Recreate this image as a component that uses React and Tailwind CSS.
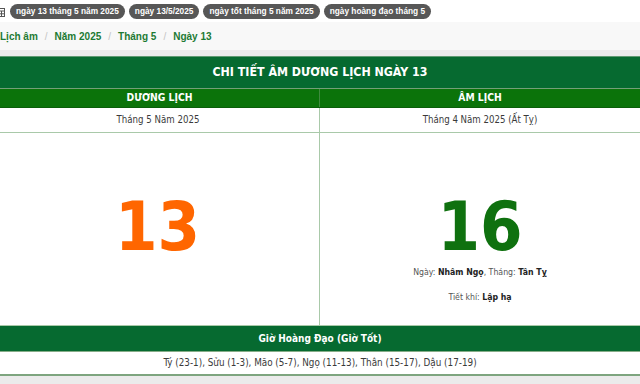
import React from 'react';

const chips = ['ngày 13 tháng 5 năm 2025', 'ngày 13/5/2025', 'ngày tốt tháng 5 năm 2025', 'ngày hoàng đạo tháng 5'];
const crumbs = ['Lịch âm', 'Năm 2025', 'Tháng 5', 'Ngày 13'];

export default function App() {
  return (
    <div className="w-[640px] h-[384px] overflow-hidden bg-[#ebebeb] font-['Liberation_Sans',Arial,sans-serif]">
      {/* tag chips */}
      <div className="h-[22px] bg-white flex items-center gap-[4px] pt-[1px]">
        <svg className="ml-[-5px] mr-[1px]" width="10" height="10" viewBox="0 0 10 10">
          <rect x="0.5" y="1.5" width="9" height="8" fill="none" stroke="#555" />
          <path d="M0.5 4 H9.5 M3.5 4 V9.5 M6.5 4 V9.5 M0.5 6.8 H9.5" stroke="#555" strokeWidth="1" />
        </svg>
        {chips.map((c) => (
          <span key={c} className="h-[15px] px-[6px] rounded-full bg-[#575757] text-white text-[8.3px] font-bold leading-[15px] whitespace-nowrap">
            {c}
          </span>
        ))}
      </div>

      {/* breadcrumb */}
      <div className="h-[28px] bg-[#f8f8f8] flex items-center text-[10px] font-bold text-[#1d7a33]">
        {crumbs.map((c, i) => (
          <React.Fragment key={c}>
            {i > 0 && <span className="px-[7px] font-normal text-[#c4c4c4]">/</span>}
            <span>{c}</span>
          </React.Fragment>
        ))}
      </div>

      <div className="h-[6px]" />

      {/* calendar table */}
      <div className="bg-white font-['DejaVu_Sans',sans-serif] font-stretch-condensed">
        <div className="h-[32px] bg-[#066a30] border-t border-[#5f9a72] flex items-center justify-center text-white text-[12.3px] font-bold">
          CHI TIẾT ÂM DƯƠNG LỊCH NGÀY 13
        </div>
        <div className="h-[1px] bg-[#739f78]" />
        <div className="grid grid-cols-2 h-[19px] bg-[#0b730a] border-b border-[#0a5f0a] text-white text-[10.3px] font-bold">
          <div className="flex items-center justify-center border-r border-[#3f8a3f]">DƯƠNG LỊCH</div>
          <div className="flex items-center justify-center">ÂM LỊCH</div>
        </div>
        <div className="grid grid-cols-2 h-[25px] border-b border-[#a9c9a9] text-[9.6px] text-[#3a3a3a]">
          <div className="flex items-center justify-center border-r border-[#a9c9a9] pr-[3px]">Tháng 5 Năm 2025</div>
          <div className="flex items-center justify-center">Tháng 4 Năm 2025 (Ất Tỵ)</div>
        </div>
        <div className="grid grid-cols-2 h-[193px] border-b border-[#a9c9a9]">
          <div className="border-r border-[#a9c9a9] flex justify-center pt-[60px] pr-[4px]">
            <span className="text-[68px] leading-[68px] font-bold text-[#ff6600]">13</span>
          </div>
          <div className="flex flex-col items-center pt-[60px]">
            <span className="text-[68px] leading-[68px] font-bold text-[#0f710f]">16</span>
            <div className="mt-[5px] text-[8.7px] leading-[12px] text-[#555]">
              Ngày: <b className="text-[#222]">Nhâm Ngọ</b>, Tháng: <b className="text-[#222]">Tân Tỵ</b>
            </div>
            <div className="mt-[13px] text-[8.7px] leading-[12px] text-[#555]">
              Tiết khí: <b className="text-[#222]">Lập hạ</b>
            </div>
          </div>
        </div>
        <div className="h-[26px] bg-[#066a30] border-b border-[#86ad88] flex items-center justify-center text-white text-[10px] font-bold">
          Giờ Hoàng Đạo (Giờ Tốt)
        </div>
        <div className="h-[24px] border-b-2 border-[#7ea57f] flex items-center justify-center text-[9.8px] text-[#3a3a3a]">
          Tý (23-1), Sửu (1-3), Mão (5-7), Ngọ (11-13), Thân (15-17), Dậu (17-19)
        </div>
      </div>
    </div>
  );
}
